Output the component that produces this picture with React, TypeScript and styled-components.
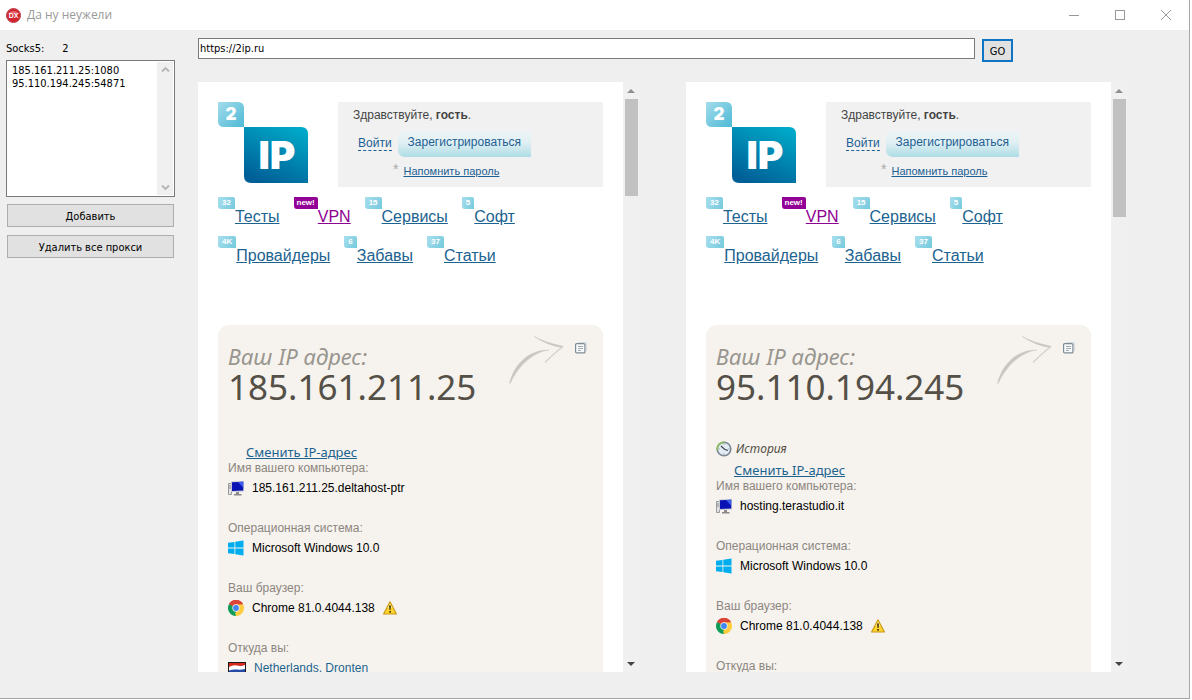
import React from "react";
import styled, { createGlobalStyle } from "styled-components";

const uiFont = `"DejaVu Sans Condensed", "Noto Sans", sans-serif`;
const pageFont = `"Liberation Sans", Arial, sans-serif`;
const humanist = `"Noto Sans", "Open Sans", sans-serif`;

const GlobalStyle = createGlobalStyle`
  *, *::before, *::after { box-sizing: border-box; }
  html, body { margin: 0; background: #fff; }
  button, input, textarea { font: inherit; color: inherit; border-radius: 0; }
  svg { display: block; flex: none; }
`;

/* ---------- window ---------- */

const Screen = styled.div`
  height: 100vh;
  padding: 0 2px 1px 0;
  font: 11px/13px ${uiFont};
  color: #000;
`;

const Window = styled.div`
  height: 100%;
  display: flex;
  flex-direction: column;
  background: #efefef;
  border: solid #a6a6a6;
  border-width: 0 1px 1px 0;
`;

const TitleBar = styled.header`
  flex: none;
  height: 30px;
  display: flex;
  align-items: center;
  gap: 6px;
  padding-left: 6px;
  background: #fff;
`;

const Title = styled.h1`
  flex: 1;
  margin: 0;
  font: 400 12px/16px "Open Sans", "Noto Sans", sans-serif;
  color: #999;
`;

const CaptionGroup = styled.div`
  display: flex;
`;

const CaptionButton = styled.button`
  width: 46px;
  height: 30px;
  padding: 0;
  border: 0;
  background: none;
  display: grid;
  place-items: center;
`;

const Body = styled.div`
  flex: 1;
  min-height: 0;
  display: flex;
`;

/* ---------- proxy list ---------- */

const Sidebar = styled.aside`
  flex: none;
  width: 198px;
  padding: 12px 23px 0 6px;
  display: flex;
  flex-direction: column;
`;

const ListCaption = styled.div`
  display: flex;
  gap: 18px;
  height: 18px;
`;

const ListBox = styled.div`
  display: flex;
  height: 137px;
  border: 1px solid #7a7a7a;
  background: #fff;
`;

const ProxyText = styled.textarea`
  flex: 1;
  min-width: 0;
  padding: 3px 5px;
  border: 0;
  outline: 0;
  resize: none;
  overflow: hidden;
  white-space: pre;
  background: none;
`;

const ListScroll = styled.div`
  width: 16px;
  margin: 1px;
  padding: 4px 0;
  display: flex;
  flex-direction: column;
  align-items: center;
  justify-content: space-between;
  background: #f0f0f0;
`;

const ButtonStack = styled.div`
  display: flex;
  flex-direction: column;
  gap: 8px;
  padding: 7px 1px 0;
`;

const PushButton = styled.button<{ $focused?: boolean }>`
  height: 23px;
  padding: 1px 5px 0;
  background: #e1e1e1;
  border: ${(p) => (p.$focused ? "2px solid #0f74c4" : "1px solid #adadad")};
`;

/* ---------- browser area ---------- */

const Main = styled.main`
  flex: 1;
  min-width: 0;
  display: flex;
  flex-direction: column;
`;

const AddressRow = styled.form`
  flex: none;
  height: 52px;
  display: flex;
  gap: 7px;
  padding: 8px 176px 0 0;
`;

const Address = styled.input`
  flex: 1;
  min-width: 0;
  height: 21px;
  padding: 0 1px 1px;
  border: 1px solid #7a7a7a;
  background: #fff;
`;

const GoSlot = styled.div`
  padding-top: 1px;
  button { width: 31px; }
`;

const Panes = styled.div`
  flex: 1;
  min-height: 0;
  display: grid;
  grid-template-columns: 1fr 1fr;
  grid-template-rows: 100%;
  gap: 47px;
  padding: 0 62px 26px 0;
`;

const Pane = styled.section`
  min-width: 0;
  display: flex;
  overflow: hidden;
`;

const Page = styled.div`
  flex: 1;
  min-width: 0;
  overflow: hidden;
  padding: 20px 20px 0;
  background: #fff;
  font: 12px/14px ${pageFont};
`;

const PaneScroll = styled.div`
  flex: none;
  width: 16px;
  display: flex;
  flex-direction: column;
  align-items: center;
  background: #f0f0f0;
`;

const ScrollButton = styled.button`
  width: 16px;
  height: 17px;
  padding: 0;
  border: 0;
  background: none;
  display: grid;
  place-items: center;
`;

const Track = styled.div`
  flex: 1;
  width: 13px;
`;

const Thumb = styled.div<{ $size: number }>`
  height: ${(p) => p.$size}px;
  background: #c1c1c1;
`;

/* ---------- page header ---------- */

const PageTop = styled.div`
  display: flex;
  gap: 30px;
`;

const Greeting = styled.div`
  flex: 1;
  min-width: 0;
  height: 85px;
  padding: 6px 15px 0;
  background: #f1f1f1;
  color: #444;
`;

const Account = styled.div`
  display: flex;
  align-items: center;
  gap: 6px;
  margin-top: 8px;
  padding-left: 5px;
`;

const SignIn = styled.a`
  color: #1c5f94;
  text-decoration: none;
  border-bottom: 1px dashed #1c5f94;
  margin-bottom: 1px;
`;

const Register = styled.a`
  height: 27px;
  padding: 0 10px;
  line-height: 24px;
  color: #1c5f94;
  text-decoration: none;
  background: linear-gradient(#eef4f5, #e2f0f3 45%, #aedde6);
  border-radius: 7px 0 0 7px;
`;

const Remind = styled.div`
  display: flex;
  gap: 5px;
  margin-top: 7px;
  padding-left: 40px;
  color: #aaa;
  font-size: 11px;
  line-height: 14px;
  a { color: #1c5f94; }
  span { font-size: 14px; line-height: 10px; }
`;

const Nav = styled.nav`
  display: flex;
  flex-wrap: wrap;
  gap: 13px 14px;
  margin-top: 10px;
`;

const NavItem = styled.div<{ $accent?: boolean }>`
  display: flex;
  align-items: flex-start;
  height: 26px;
  a {
    padding-top: 11px;
    font-size: 16px;
    line-height: 18px;
    color: ${(p) => (p.$accent ? "#8e0091" : "#1c6390")};
  }
`;

const Badge = styled.span<{ $accent?: boolean }>`
  height: 12px;
  padding: ${(p) => (p.$accent ? "0 3px" : "0 4px")};
  border-radius: 0 2px 0 3px;
  font: 700 8px/11px ${pageFont};
  color: #fff;
  background: ${(p) => (p.$accent ? "#920095" : "linear-gradient(120deg, #a9dfee, #74c9dd)")};
`;

/* ---------- address card ---------- */

const Card = styled.article`
  display: flex;
  justify-content: space-between;
  min-height: 400px;
  margin-top: 63px;
  padding: 0 16px 0 10px;
  border-radius: 11px 11px 0 0;
  background: #f6f3ee;
`;

const Facts = styled.div`
  flex: 1;
  min-width: 0;
  padding-top: 19px;
`;

const CardHeading = styled.h2`
  margin: 0;
  font: italic 400 22px/24px ${humanist};
  color: #99968f;
`;

const IpValue = styled.div`
  margin-bottom: 33px;
  font: 35px/38px ${humanist};
  color: #555047;
`;

const HistorySlot = styled.div`
  min-height: 4px;
`;

const HistoryLink = styled.a`
  display: flex;
  align-items: center;
  gap: 4px;
  height: 22px;
  padding-bottom: 3px;
  font: italic 12px/16px ${humanist};
  color: #555047;
  text-decoration: none;
`;

const ChangeLink = styled.a`
  display: block;
  width: max-content;
  margin-left: 18px;
  font: 13px/18px ${humanist};
  color: #1c6390;
`;

const FactList = styled.dl`
  margin: 0;
`;

const Fact = styled.div`
  height: 60px;
  dt { color: #8c8680; }
  dd {
    display: flex;
    align-items: center;
    height: 20px;
    margin: 3px 0 0;
    gap: 8px;
  }
  a { color: #1c6390; text-decoration: none; }
`;

const Decor = styled.div`
  flex: none;
  display: flex;
  align-items: flex-start;
  gap: 10px;
  padding-top: 11px;
`;

const NoteButton = styled.button`
  margin-top: 6px;
  padding: 0;
  border: 0;
  background: none;
`;

/* ---------- drawings ---------- */

const AppIcon = () => (
  <svg width="15" height="15" viewBox="0 0 15 15" aria-hidden="true">
    <circle cx="7.5" cy="7.5" r="7" fill="#d3222f" stroke="#b9474d" />
    <path d="M2 6a6 5 0 0 1 11 0z" fill="#e5656b" />
    <text x="7.5" y="9.8" textAnchor="middle" fontFamily="Liberation Sans" fontWeight="700" fontSize="7" fill="#fff">DX</text>
  </svg>
);

const Logo = ({ id }: { id: string }) => (
  <svg width="90" height="82" viewBox="0 0 90 82" role="img" aria-label="2IP">
    <defs>
      <linearGradient id={`${id}-small`} x1="0" y1="0" x2="1" y2="1">
        <stop offset="0" stopColor="#a2dcea" />
        <stop offset="1" stopColor="#4fb9d6" />
      </linearGradient>
      <linearGradient id={`${id}-big`} x1="0.8" y1="0" x2="0.3" y2="1">
        <stop offset="0" stopColor="#00a9c9" />
        <stop offset="1" stopColor="#005f96" />
      </linearGradient>
    </defs>
    <path d="M0 0h20q6 0 6 6v19H6q-6 0-6-6z" fill={`url(#${id}-small)`} />
    <path d="M26 25h57q7 0 7 7v49H33q-7 0-7-7z" fill={`url(#${id}-big)`} />
    <text x="13" y="18" textAnchor="middle" fontFamily="Inter, Open Sans" fontWeight="900" fontSize="17" fill="#fff">2</text>
    <text x="59" y="67" textAnchor="middle" fontFamily="Inter, Open Sans" fontWeight="900" fontSize="39" fill="#fff">IP</text>
  </svg>
);

const Chevron = ({ down }: { down?: boolean }) => (
  <svg width="9" height="7" viewBox="0 0 9 7" aria-hidden="true">
    <path d={down ? "M1 1.5l3.500 3.500L8 1.500" : "M1 5.500l3.500-3.500L8 5.500"} fill="none" stroke="#b5b5b5" strokeWidth="1.800" />
  </svg>
);

const Triangle = ({ down }: { down?: boolean }) => (
  <svg width="8" height="4" viewBox="0 0 8 4" aria-hidden="true">
    <path d={down ? "M0 0h8L4 4z" : "M0 4h8L4 0z"} fill={down ? "#444" : "#8f8f8f"} />
  </svg>
);

const ArrowSketch = () => (
  <svg width="56" height="50" viewBox="0 0 56 50" aria-hidden="true">
    <path d="M0.500 47.500C4 31 18 13.500 40 14C26 15.500 10 28 1.500 47z" fill="#c9c5bf" stroke="#c9c5bf" strokeWidth="0.400" />
    <path d="M25 0.300Q37 7 54 10.200L53 11.600Q38 9.500 25 0.300z" fill="#c9c5bf" stroke="#c9c5bf" strokeWidth="0.400" />
    <path d="M54 10.500Q46 16.500 36 26.500" fill="none" stroke="#d3cfc9" strokeWidth="1.300" />
  </svg>
);

const NoteIcon = () => (
  <svg width="12" height="12" viewBox="0 0 12 12" aria-hidden="true">
    <path d="M3 0.500h8.500V9" fill="none" stroke="#d3dde2" />
    <rect x="0.600" y="1.600" width="9.300" height="9.300" rx="1" fill="#f8fafc" stroke="#7e8c96" strokeWidth="1.200" />
    <path d="M3 4.500h5M3 6.500h5M3 8.500h3" stroke="#a3adb5" strokeWidth="1" />
  </svg>
);

const ClockIcon = () => (
  <svg width="16" height="16" viewBox="0 0 16 16" aria-hidden="true">
    <circle cx="8" cy="8" r="6.800" fill="#e4edf5" stroke="#7b8794" strokeWidth="1.600" />
    <path d="M1.200 9A7 7 0 0 1 8.500 1.200" fill="none" stroke="#8fbf68" strokeWidth="2" />
    <path d="M5 5l3.500 3.200L12 9.500" fill="none" stroke="#3d464f" strokeWidth="1.200" />
    <path d="M8 2.500v1M13.500 8h-1M8 13.500v-1M2.500 8h1" stroke="#7b8794" />
  </svg>
);

const ComputerIcon = () => (
  <svg width="16" height="16" viewBox="0 0 16 16" aria-hidden="true">
    <path d="M0.500 3.500h3v11h-3z" fill="#e2e2e2" stroke="#9a9a9a" />
    <path d="M1 6h2M1 8h2" stroke="#888" />
    <path d="M3 1.500L16 1v10.500L3 12z" fill="#c3c9d2" />
    <path d="M4 2.300L15.200 1.800v8.800L4 11z" fill="#0a12b4" />
    <path d="M10 2l5.200-.2v6z" fill="#3c5cf0" />
    <path d="M8 12h3v2h2.500v1.500H6V14h2z" fill="#8a8a8a" />
  </svg>
);

const WindowsIcon = () => (
  <svg width="16" height="16" viewBox="0 0 16 16" aria-hidden="true">
    <path d="M0 2.800L6.500 1.900v5.700H0zM7.300 1.800L15.500.6v7H7.300zM0 8.400h6.500v5.700L0 13.200zM7.300 8.400h8.200v7l-8.200-1.200z" fill="#00adef" />
  </svg>
);

const ChromeIcon = () => (
  <svg width="16" height="16" viewBox="0 0 16 16" aria-hidden="true">
    <path d="M8 8L1.070 4A8 8 0 0 1 14.930 4z" fill="#db4437" />
    <path d="M8 8L14.930 4A8 8 0 0 1 8 16z" fill="#ffcd40" />
    <path d="M8 8v8A8 8 0 0 1 1.070 4z" fill="#0f9d58" />
    <path d="M8 4.200h7L11.500 10L8 16L7 13L11.300 9.900z" fill="#ffcd40" />
    <path d="M1.070 4L4.700 10L8 11.500L8 8z" fill="#0f9d58" />
    <path d="M1.070 4A8 8 0 0 1 15 4.200H8L4.600 6z" fill="#db4437" />
    <circle cx="8" cy="8" r="3.700" fill="#f4f1ee" />
    <circle cx="8" cy="8" r="2.900" fill="#4285f4" />
  </svg>
);

const WarningIcon = () => (
  <svg width="14" height="16" viewBox="1 0 14 16" role="img" aria-label="Внимание">
    <path d="M8 1.800L14.400 14H1.600z" fill="#ffd52e" stroke="#c99a17" strokeWidth="1.200" strokeLinejoin="round" />
    <path d="M8 3.500L10.500 8H5.500z" fill="#ffea85" />
    <path d="M7 5.500h2L8.500 10h-1z" fill="#4a3208" />
    <rect x="7.200" y="11" width="1.700" height="1.700" fill="#4a3208" />
  </svg>
);

const FlagIcon = () => (
  <svg width="18" height="12" viewBox="0 0 18 12" aria-hidden="true">
    <rect width="18" height="12" fill="#1a1a1a" />
    <rect x="1" y="1" width="16" height="10" fill="#fff" />
    <path d="M1 1h16v2Q13 4.500 9 3.500T1 5z" fill="#d9281c" />
    <path d="M1 8.500Q5 7 9 7.500T17 7v4H1z" fill="#2348a5" />
  </svg>
);

/* ---------- data ---------- */

interface Session {
  id: string;
  ip: string;
  host: string;
  history?: boolean;
  place?: string;
  thumb: number;
}

const sessions: Session[] = [
  { id: "first", ip: "185.161.211.25", host: "185.161.211.25.deltahost-ptr", place: "Netherlands, Dronten", thumb: 97 },
  { id: "second", ip: "95.110.194.245", host: "hosting.terastudio.it", history: true, thumb: 118 },
];

const links = [
  { badge: "32", text: "Тесты" },
  { badge: "new!", text: "VPN", accent: true },
  { badge: "15", text: "Сервисы" },
  { badge: "5", text: "Софт" },
  { badge: "4K", text: "Провайдеры" },
  { badge: "6", text: "Забавы" },
  { badge: "37", text: "Статьи" },
];

const BrowserPane = ({ session }: { session: Session }) => (
  <Pane aria-label={session.ip}>
    <Page>
      <PageTop>
        <Logo id={session.id} />
        <Greeting>
          Здравствуйте, <b>гость</b>.
          <Account>
            <SignIn href="#login">Войти</SignIn>
            <Register href="#register">Зарегистрироваться</Register>
          </Account>
          <Remind>
            <span>*</span>
            <a href="#remind">Напомнить пароль</a>
          </Remind>
        </Greeting>
      </PageTop>
      <Nav>
        {links.map((l) => (
          <NavItem key={l.text} $accent={l.accent}>
            <Badge $accent={l.accent}>{l.badge}</Badge>
            <a href="#section">{l.text}</a>
          </NavItem>
        ))}
      </Nav>
      <Card>
        <Facts>
          <CardHeading>Ваш IP адрес:</CardHeading>
          <IpValue>{session.ip}</IpValue>
          <HistorySlot>
            {session.history && (
              <HistoryLink href="#history">
                <ClockIcon />
                История
              </HistoryLink>
            )}
          </HistorySlot>
          <ChangeLink href="#change">Сменить IP-адрес</ChangeLink>
          <FactList>
            <Fact>
              <dt>Имя вашего компьютера:</dt>
              <dd><ComputerIcon />{session.host}</dd>
            </Fact>
            <Fact>
              <dt>Операционная система:</dt>
              <dd><WindowsIcon />Microsoft Windows 10.0</dd>
            </Fact>
            <Fact>
              <dt>Ваш браузер:</dt>
              <dd><ChromeIcon />Chrome 81.0.4044.138<WarningIcon /></dd>
            </Fact>
            <Fact>
              <dt>Откуда вы:</dt>
              {session.place && (
                <dd><FlagIcon /><a href="#place">{session.place}</a></dd>
              )}
            </Fact>
          </FactList>
        </Facts>
        <Decor>
          <ArrowSketch />
          <NoteButton type="button" aria-label="Скопировать"><NoteIcon /></NoteButton>
        </Decor>
      </Card>
    </Page>
    <PaneScroll>
      <ScrollButton type="button" aria-label="Вверх"><Triangle /></ScrollButton>
      <Track><Thumb $size={session.thumb} /></Track>
      <ScrollButton type="button" aria-label="Вниз"><Triangle down /></ScrollButton>
    </PaneScroll>
  </Pane>
);

export default function App() {
  return (
    <Screen>
      <GlobalStyle />
      <Window>
        <TitleBar>
          <AppIcon />
          <Title>Да ну неужели</Title>
          <CaptionGroup>
            <CaptionButton type="button" aria-label="Свернуть">
              <svg width="10" height="10"><path d="M0 5.500h10" stroke="#999" /></svg>
            </CaptionButton>
            <CaptionButton type="button" aria-label="Развернуть">
              <svg width="10" height="10"><rect x="0.500" y="0.500" width="9" height="9" fill="none" stroke="#999" /></svg>
            </CaptionButton>
            <CaptionButton type="button" aria-label="Закрыть">
              <svg width="10" height="10"><path d="M0 0l10 10M10 0L0 10" stroke="#999" /></svg>
            </CaptionButton>
          </CaptionGroup>
        </TitleBar>
        <Body>
          <Sidebar>
            <ListCaption>
              <label htmlFor="proxies">Socks5:</label>
              <span>2</span>
            </ListCaption>
            <ListBox>
              <ProxyText id="proxies" spellCheck={false} defaultValue={"185.161.211.25:1080\n95.110.194.245:54871"} />
              <ListScroll>
                <Chevron />
                <Chevron down />
              </ListScroll>
            </ListBox>
            <ButtonStack>
              <PushButton type="button">Добавить</PushButton>
              <PushButton type="button">Удалить все прокси</PushButton>
            </ButtonStack>
          </Sidebar>
          <Main>
            <AddressRow onSubmit={(e) => e.preventDefault()}>
              <Address aria-label="Адрес" defaultValue="https://2ip.ru" />
              <GoSlot>
                <PushButton $focused>GO</PushButton>
              </GoSlot>
            </AddressRow>
            <Panes>
              {sessions.map((s) => (
                <BrowserPane key={s.id} session={s} />
              ))}
            </Panes>
          </Main>
        </Body>
      </Window>
    </Screen>
  );
}
